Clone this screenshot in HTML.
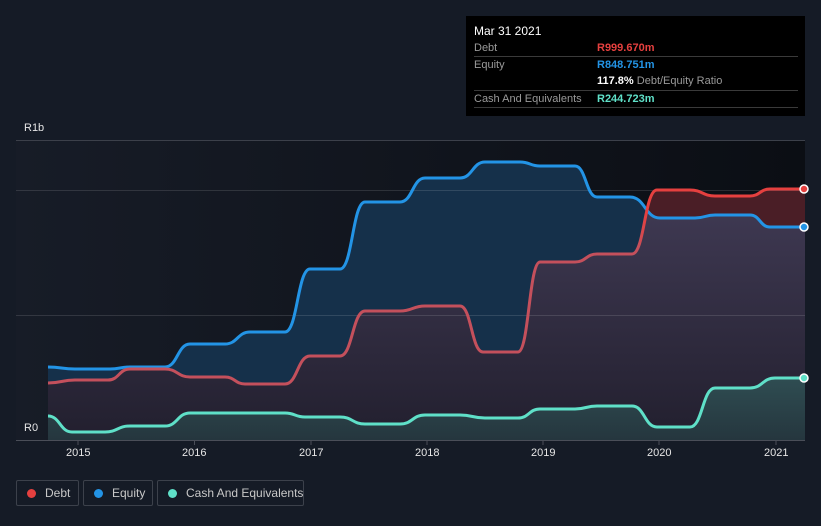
<!DOCTYPE html>
<html><head><meta charset="utf-8"><style>
html,body{margin:0;padding:0;background:#151b26;width:821px;height:526px;overflow:hidden;font-family:"Liberation Sans",sans-serif}
.tt{position:absolute;left:466px;top:16px;width:339px;height:100px;background:#000;color:#fff;font-size:11px}
.tt .r{position:absolute;left:8px;width:324px;height:16px;border-bottom:1px solid #3a3a3a}
.tt .l{position:absolute;left:0;top:2px;color:#9a9a9a}
.tt .v{position:absolute;left:123px;top:2px;font-weight:bold;white-space:nowrap}
.ax{position:absolute;color:#e6e6e6;font-size:11px}
.leg{position:absolute;top:480px;height:26px;border:1px solid #3c414b;border-radius:2px;color:#c8c8c8;font-size:12px;box-sizing:border-box;line-height:24px;white-space:nowrap}
.leg i{position:absolute;left:10px;top:8px;width:9px;height:9px;border-radius:50%}
.leg span{position:absolute;left:28px;white-space:nowrap}
</style></head><body>
<svg width="821" height="526" style="position:absolute;left:0;top:0">
<defs>
<linearGradient id="bg" x1="0" x2="1"><stop offset="0" stop-color="#171c27"/><stop offset="1" stop-color="#0b0e14"/></linearGradient>
<linearGradient id="dl" gradientUnits="userSpaceOnUse" x1="48" y1="0" x2="805" y2="0"><stop offset="0.78" stop-color="#c4505c"/><stop offset="0.79" stop-color="#e5403f"/></linearGradient>
<linearGradient id="pf" x1="0" y1="0" x2="0" y2="1"><stop offset="0" stop-color="#413b55"/><stop offset="1" stop-color="#221f2e"/></linearGradient>
<linearGradient id="cf" x1="0" y1="0" x2="0" y2="1"><stop offset="0" stop-color="#2f4d52"/><stop offset="1" stop-color="#25363e"/></linearGradient>
<clipPath id="eqc"><path id="eqa2"/></clipPath>
</defs>
<rect x="16" y="140" width="789" height="300" fill="url(#bg)"/>
<path id="eqa" fill="#15304a"/>
<path id="dea" fill="#4a1e26"/>
<path id="dea2" fill="url(#pf)" clip-path="url(#eqc)"/>
<path id="caa" fill="url(#cf)"/>
<line x1="16" y1="140.5" x2="805" y2="140.5" stroke="#3c404a"/>
<line x1="16" y1="190.5" x2="805" y2="190.5" stroke="#fff" stroke-opacity="0.12"/>
<line x1="16" y1="315.5" x2="805" y2="315.5" stroke="#fff" stroke-opacity="0.12"/>
<path id="eql" fill="none" stroke="#2394e6" stroke-width="3"/>
<path id="del" fill="none" stroke="url(#dl)" stroke-width="3"/>
<path id="cal" fill="none" stroke="#5fe0c8" stroke-width="3"/>
<line x1="16" y1="440.5" x2="805" y2="440.5" stroke="#4a4e58"/>
<g stroke="#4a4e58"><line x1="78" y1="440" x2="78" y2="445"/><line x1="194.5" y1="440" x2="194.5" y2="445"/><line x1="311" y1="440" x2="311" y2="445"/><line x1="427" y1="440" x2="427" y2="445"/><line x1="543" y1="440" x2="543" y2="445"/><line x1="659" y1="440" x2="659" y2="445"/><line x1="776" y1="440" x2="776" y2="445"/></g>
<circle cx="804" cy="189" r="4" fill="#e5403f" stroke="#fff" stroke-width="1.5"/>
<circle cx="804" cy="227" r="4" fill="#2394e6" stroke="#fff" stroke-width="1.5"/>
<circle cx="804" cy="378" r="4" fill="#5fe0c8" stroke="#fff" stroke-width="1.5"/>
</svg>
<div class="ax" style="left:24px;top:122px">R1b</div>
<div class="ax" style="left:24px;top:422px">R0</div>
<div class="ax" style="left:66px;top:447px">2015</div>
<div class="ax" style="left:182px;top:447px">2016</div>
<div class="ax" style="left:299px;top:447px">2017</div>
<div class="ax" style="left:415px;top:447px">2018</div>
<div class="ax" style="left:531px;top:447px">2019</div>
<div class="ax" style="left:647px;top:447px">2020</div>
<div class="ax" style="left:764px;top:447px">2021</div>
<div class="tt">
<div style="position:absolute;left:8px;top:8px;font-size:12px">Mar 31 2021</div>
<div class="r" style="top:24px"><span class="l">Debt</span><span class="v" style="color:#e5403f">R999.670m</span></div>
<div class="r" style="top:41px;height:33px"><span class="l">Equity</span><span class="v" style="color:#2394e6">R848.751m</span><span class="v" style="top:18px">117.8% <span style="color:#9a9a9a;font-weight:normal">Debt/Equity Ratio</span></span></div>
<div class="r" style="top:75px"><span class="l">Cash And Equivalents</span><span class="v" style="color:#5fe0c8">R244.723m</span></div>
</div>
<div class="leg" style="left:16px;width:63px"><i style="background:#e5403f"></i><span>Debt</span></div>
<div class="leg" style="left:83px;width:70px"><i style="background:#2394e6"></i><span>Equity</span></div>
<div class="leg" style="left:157px;width:147px"><i style="background:#5fe0c8"></i><span>Cash And Equivalents</span></div>
<script>
function sm(p){var d="M"+p[0][0]+","+p[0][1];for(var i=1;i<p.length;i++){var a=p[i-1],b=p[i],m=(a[0]+b[0])/2;d+=" C"+m+","+a[1]+" "+m+","+b[1]+" "+b[0]+","+b[1];}return d;}
function ar(p){return sm(p)+" L805,440 L48,440 Z";}
var E=[[48,367],[75,369],[110,369],[130,367],[165,367],[190,344],[225,344],[250,332],[285,332],[310,269],[340,269],[365,202],[400,202],[425,178],[460,178],[485,162],[520,162],[540,166],[575,166],[597,197],[630,197],[660,218],[695,218],[715,215],[750,215],[770,227],[805,227]];
var D=[[48,383],[75,380],[108,380],[130,369],[165,369],[190,377],[225,377],[245,384],[285,384],[310,356],[340,356],[365,311],[400,311],[425,306],[460,306],[483,352],[518,352],[540,262],[575,262],[597,254],[632,254],[657,190],[690,190],[715,196],[750,196],[770,189],[805,189]];
var C=[[48,416],[72,432],[105,432],[130,426],[165,426],[190,413],[285,413],[305,417],[340,417],[365,424],[400,424],[425,415],[460,415],[485,418],[518,418],[540,409],[575,409],[597,406],[632,406],[657,427],[690,427],[715,388],[750,388],[775,378],[805,378]];
function s(id,a,v){document.getElementById(id).setAttribute(a,v);}
s("eqa","d",ar(E));s("eqa2","d",ar(E));s("dea","d",ar(D));s("dea2","d",ar(D));s("caa","d",ar(C));
s("eql","d",sm(E));s("del","d",sm(D));s("cal","d",sm(C));
</script>
</body></html>
